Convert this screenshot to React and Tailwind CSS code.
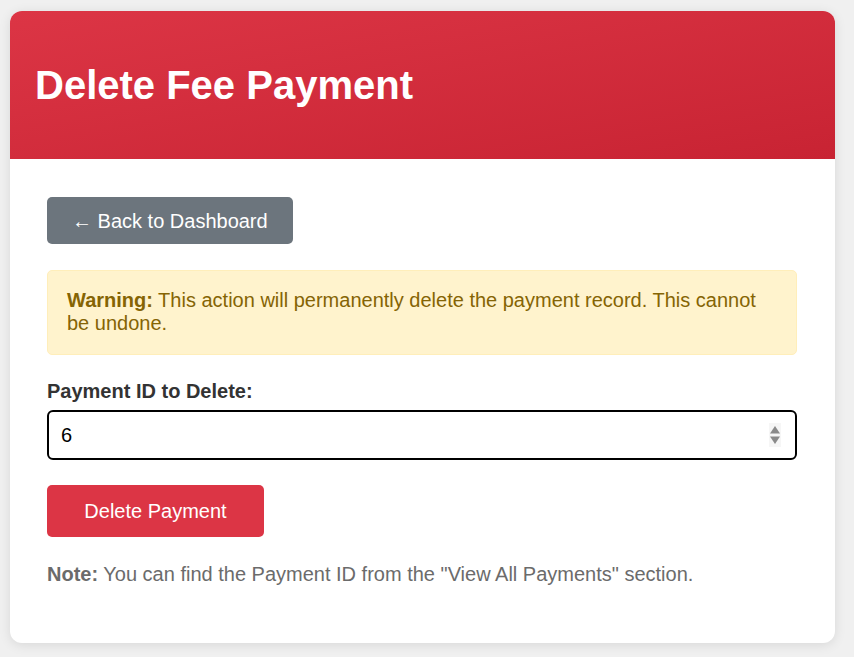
import React from "react";

const DeletePaymentPage = () => {
  return (
    <div className="min-h-screen bg-[#f0f0f0] pt-[11px] pl-[10px] font-['Liberation_Sans',Arial,sans-serif]">
      <div className="w-[825px] bg-white rounded-[12px] overflow-hidden shadow-[0_2px_12px_rgba(0,0,0,0.1)]">
        <div className="h-[148px] flex items-center px-[25px] bg-gradient-to-br from-[#dc3545] to-[#c82333]">
          <h1 className="text-[40px] font-bold text-white leading-none">
            Delete Fee Payment
          </h1>
        </div>

        <div className="pt-[38px] pl-[37px] pr-[38px] pb-[57px]">
          <button className="h-[47px] px-[25px] rounded-[5px] bg-[#6c757d] text-white text-[20px]">
            ← Back to Dashboard
          </button>

          <div className="mt-[26px] h-[85px] px-[19px] pt-[18px] border border-[#ffeeba] bg-[#fff3cd] rounded-[5px] text-[20px] leading-[23px] text-[#856404]">
            <strong>Warning:</strong> This action will permanently delete the
            payment record. This cannot be undone.
          </div>

          <label className="block mt-[25px] text-[20px] font-bold text-[#333] leading-[23px]">
            Payment ID to Delete:
          </label>
          <div className="relative mt-[7px]">
            <input
              type="text"
              readOnly
              value="6"
              className="w-full h-[50px] px-[12px] border-2 border-black rounded-[6px] text-[20px] text-black outline-none bg-white"
            />
            <div className="absolute right-[16px] top-[13px] w-[12px] h-[24px] bg-[#f6f6f6] flex items-center justify-center">
              <svg width="12" height="22" viewBox="0 0 12 22">
                <path d="M6 2 L11 9.5 L1 9.5 Z" fill="#8a8a8a" />
                <path d="M1 12.5 L11 12.5 L6 20 Z" fill="#8a8a8a" />
              </svg>
            </div>
          </div>

          <button className="mt-[25px] h-[52px] w-[217px] rounded-[5px] bg-[#dc3545] text-white text-[20px]">
            Delete Payment
          </button>

          <p className="mt-[26px] text-[20px] leading-[23px] text-[#6b6b6b]">
            <strong>Note:</strong> You can find the Payment ID from the "View
            All Payments" section.
          </p>
        </div>
      </div>
    </div>
  );
};

export default DeletePaymentPage;
